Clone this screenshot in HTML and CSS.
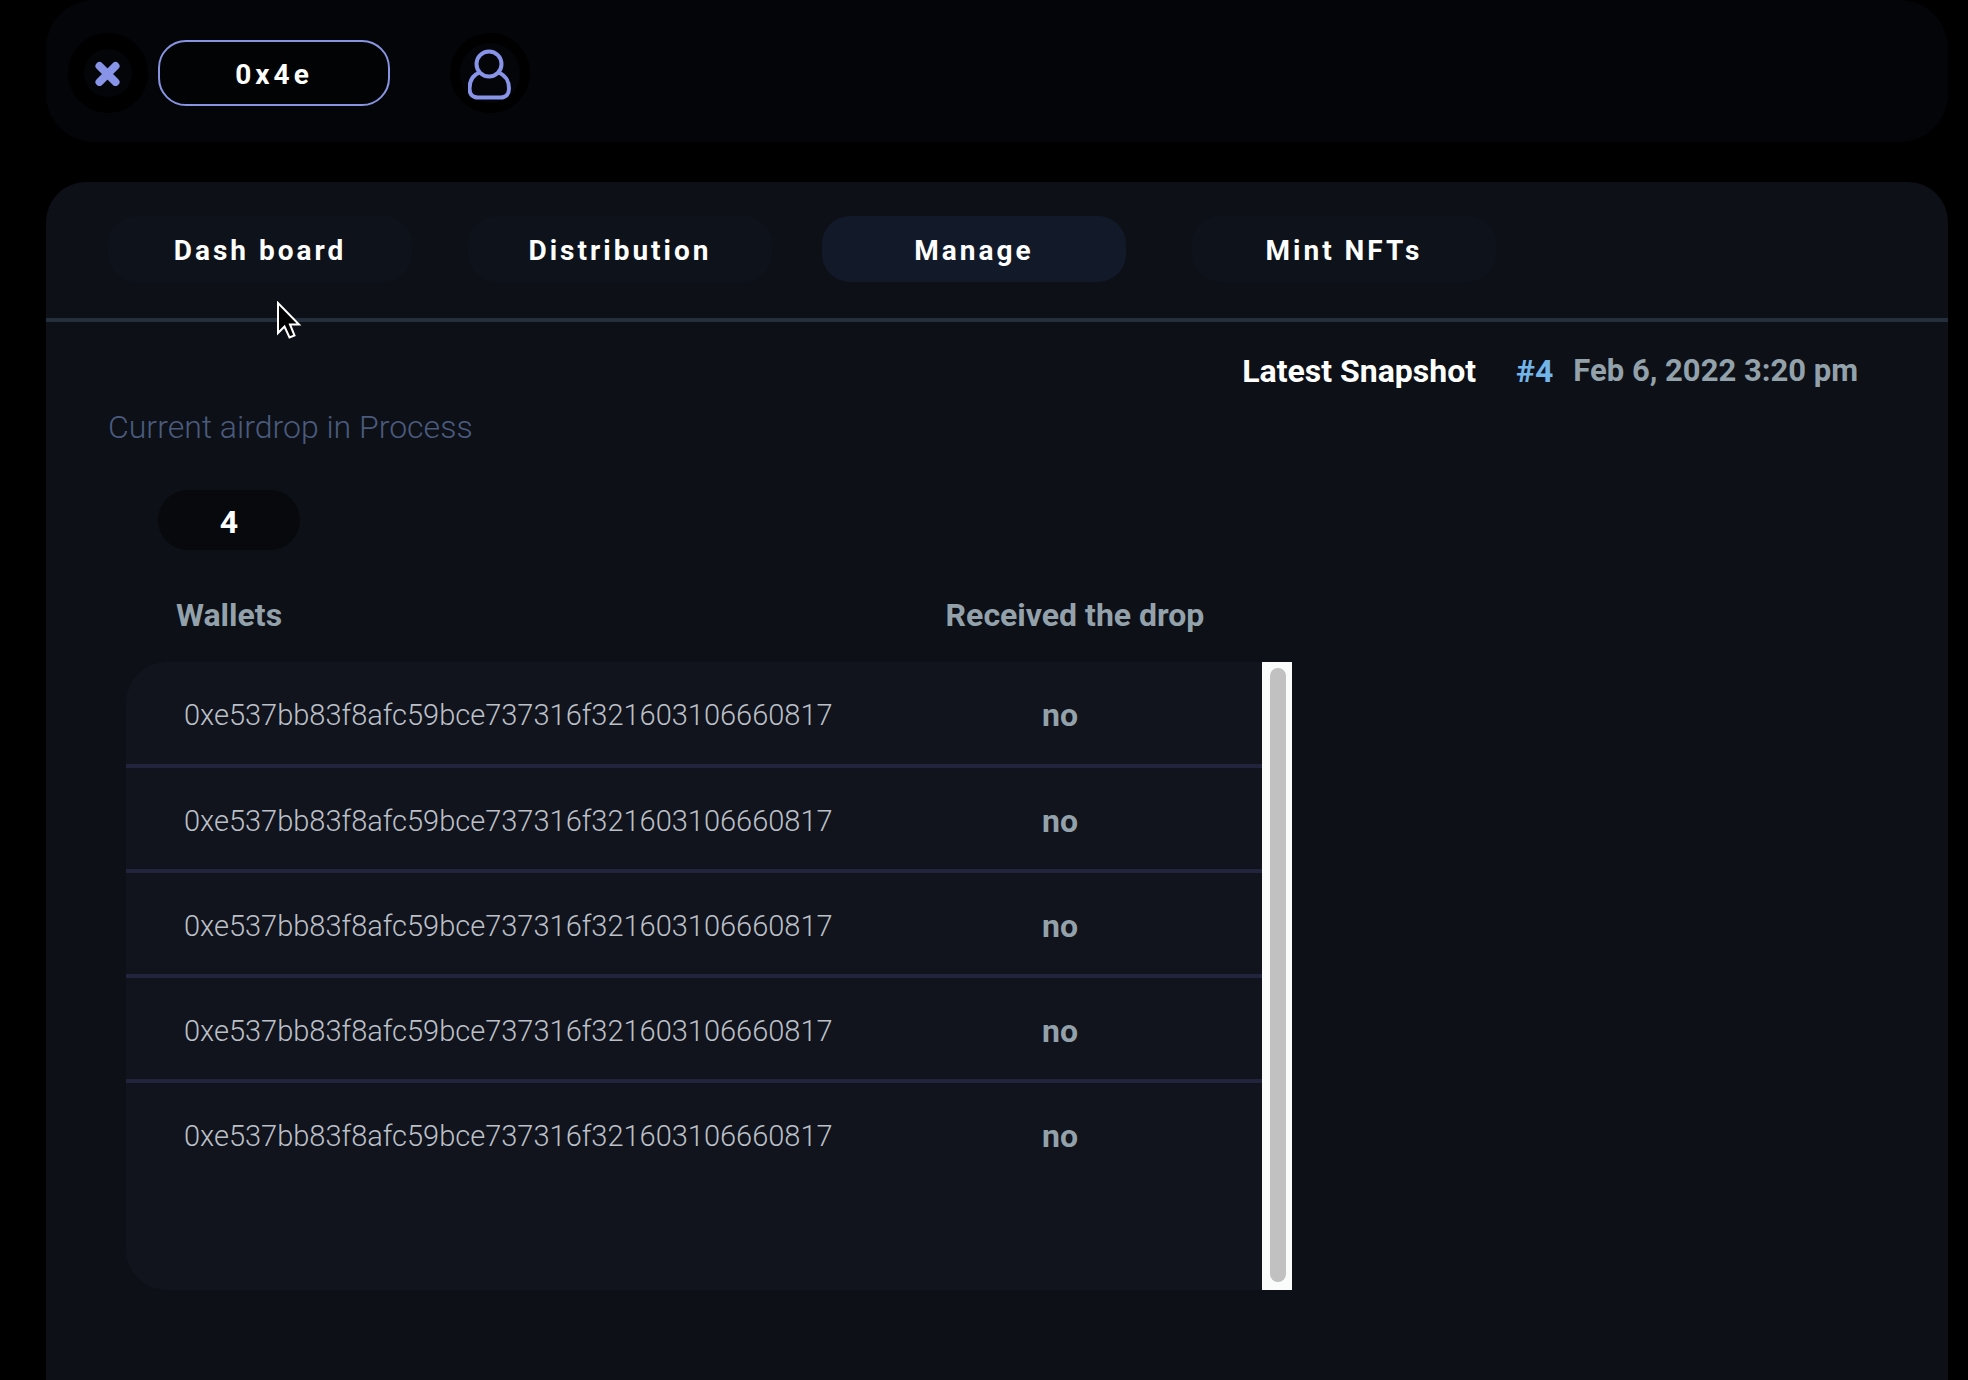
FILE: index.html
```html
<!DOCTYPE html>
<html lang="en">
<head>
<meta charset="utf-8">
<meta name="viewport" content="width=device-width, initial-scale=1">
<title>Manage airdrop</title>
<link rel="stylesheet" href="styles.css">
</head>
<body>
<header class="topbar">
  <button class="round round-close" type="button" aria-label="Disconnect">
    <svg width="26" height="26" viewBox="0 0 26 26" aria-hidden="true"><path d="M4.500 6L20.500 22M20.500 6L4.500 22" stroke="currentColor" stroke-width="8" stroke-linecap="round"/></svg>
  </button>
  <button class="wallet" type="button">0x4e</button>
  <button class="round round-user" type="button" aria-label="Account">
    <svg width="44" height="54" viewBox="0 0 44 54" fill="none" stroke="currentColor" stroke-width="4" aria-hidden="true">
      <circle cx="21" cy="18" r="12.500"/>
      <path d="M11.500 26.500C5 29 1.500 35 1.500 42.500C1.500 48 4.500 51.500 10 51.500H32.500C38 51.500 41 48 41 42.500C41 35 37 29 30.500 26.500"/>
    </svg>
  </button>
</header>

<main class="panel">
  <nav class="tabs" aria-label="Sections">
    <button class="tab" type="button">Dash board</button>
    <button class="tab" type="button">Distribution</button>
    <button class="tab tab-active" type="button" aria-current="page">Manage</button>
    <button class="tab" type="button">Mint NFTs</button>
  </nav>

  <section class="content">
    <p class="snapshot"><span class="snapshot-label">Latest Snapshot</span><span class="snapshot-id">#4</span><span class="snapshot-date">Feb 6, 2022 3:20 pm</span></p>
    <h1 class="title">Current airdrop in Process</h1>
    <div class="count">4</div>

    <div class="drops">
      <table class="grid">
        <colgroup><col class="col-wallet"><col></colgroup>
        <thead><tr><th class="head-wallet" scope="col">Wallets</th><th scope="col">Received the drop</th></tr></thead>
      </table>
      <div class="list">
        <div class="rows">
          <table class="grid" aria-label="Wallets and received drops">
            <colgroup><col class="col-wallet"><col></colgroup>
            <tbody>
              <tr><td class="address">0xe537bb83f8afc59bce737316f321603106660817</td><td class="status">no</td></tr>
              <tr><td class="address">0xe537bb83f8afc59bce737316f321603106660817</td><td class="status">no</td></tr>
              <tr><td class="address">0xe537bb83f8afc59bce737316f321603106660817</td><td class="status">no</td></tr>
              <tr><td class="address">0xe537bb83f8afc59bce737316f321603106660817</td><td class="status">no</td></tr>
              <tr><td class="address">0xe537bb83f8afc59bce737316f321603106660817</td><td class="status">no</td></tr>
            </tbody>
          </table>
        </div>
        <div class="track" aria-hidden="true"><div class="thumb"></div></div>
      </div>
    </div>
  </section>
</main>

<svg class="pointer" width="26" height="40" viewBox="0 0 26 40" aria-hidden="true"><path d="M2 2V32L8.500 25.500L13.500 36.500L18.500 34.500L14 23.500H23Z" fill="#000" stroke="#fff" stroke-width="2"/></svg>
</body>
</html>
```
FILE: styles.css
```css
* {
  box-sizing: border-box;
}

body {
  display: flex;
  flex-direction: column;
  gap: 40px;
  min-height: 100vh;
  margin: 0;
  padding: 0 20px 0 46px;
  background: #000;
  color: #93a1ab;
  font: 700 32px/40px Roboto, "Liberation Sans", sans-serif;
}

button {
  padding: 0;
  border: 0;
  color: #fff;
  font: inherit;
  cursor: pointer;
}

.topbar {
  display: flex;
  align-items: center;
  height: 142px;
  padding: 4px 22px 0;
  border-radius: 48px;
  background: #040508;
}

.round {
  display: grid;
  place-items: center;
  width: 80px;
  height: 80px;
  border-radius: 50%;
  background: #040509;
  color: #8794e8;
}

.round-close {
  border: 16px solid #000;
}

.round-user {
  margin-left: 60px;
  border: 10px solid #000;
}

.wallet {
  width: 232px;
  height: 66px;
  margin-left: 10px;
  padding-top: 3px;
  border: 2px solid #8794e0;
  border-radius: 28px;
  background: #020305;
  font-size: 28px;
  letter-spacing: 4px;
}

.panel {
  flex: 1;
  border-radius: 40px 40px 0 0;
  background: #0d1017;
}

.tabs {
  display: grid;
  grid-template-columns: 360px 354px 370px 304px;
  padding: 34px 0 36px 62px;
  border-bottom: 4px solid #252e3c;
}

.tab {
  width: 304px;
  height: 66px;
  padding-top: 3px;
  border-radius: 28px;
  background: #0e131b;
  font-size: 28px;
  letter-spacing: 3px;
}

.tab-active {
  background: #121a2a;
}

.content {
  padding: 29px 90px 90px 62px;
}

.snapshot {
  display: flex;
  justify-content: flex-end;
  margin: 0 0 16px;
}

.snapshot-label {
  margin-right: 40px;
  color: #fff;
}

.snapshot-id {
  margin-right: 20px;
  color: #72b5e8;
}

.snapshot-date {
  font-size: 31px;
}

.title {
  margin: 0 0 43px;
  color: #4a5b7e;
  font-size: 32px;
  font-weight: 300;
}

.count {
  width: 142px;
  margin: 0 0 45px 50px;
  padding: 12px 0 8px;
  border-radius: 30px;
  background: #07090d;
  color: #fff;
  text-align: center;
}

.drops {
  max-width: 1166px;
  margin-left: 18px;
}

.grid {
  width: 100%;
  border-spacing: 0;
  table-layout: fixed;
}

.col-wallet {
  width: 732px;
}

th {
  padding: 0 0 27px;
}

.head-wallet {
  padding-left: 50px;
  text-align: left;
}

.list {
  display: flex;
}

.rows {
  flex: 1;
  min-height: 628px;
  border-radius: 40px 0 0 40px;
  background: #11131d;
}

td {
  height: 105px;
  padding: 4px 0 0;
}

tr:first-child td {
  height: 102px;
}

tr + tr td {
  border-top: 4px solid #21243c;
}

.address {
  padding-left: 58px;
  color: #bcc0c8;
  font-size: 29px;
  font-weight: 300;
}

.status {
  text-align: center;
}

.track {
  display: flex;
  width: 30px;
  padding: 6px 6px 8px 8px;
  background: #fafbfb;
}

.thumb {
  flex: 1;
  border-radius: 8px;
  background: #c1c1c1;
}

.pointer {
  position: absolute;
  top: 301px;
  left: 276px;
}
```
